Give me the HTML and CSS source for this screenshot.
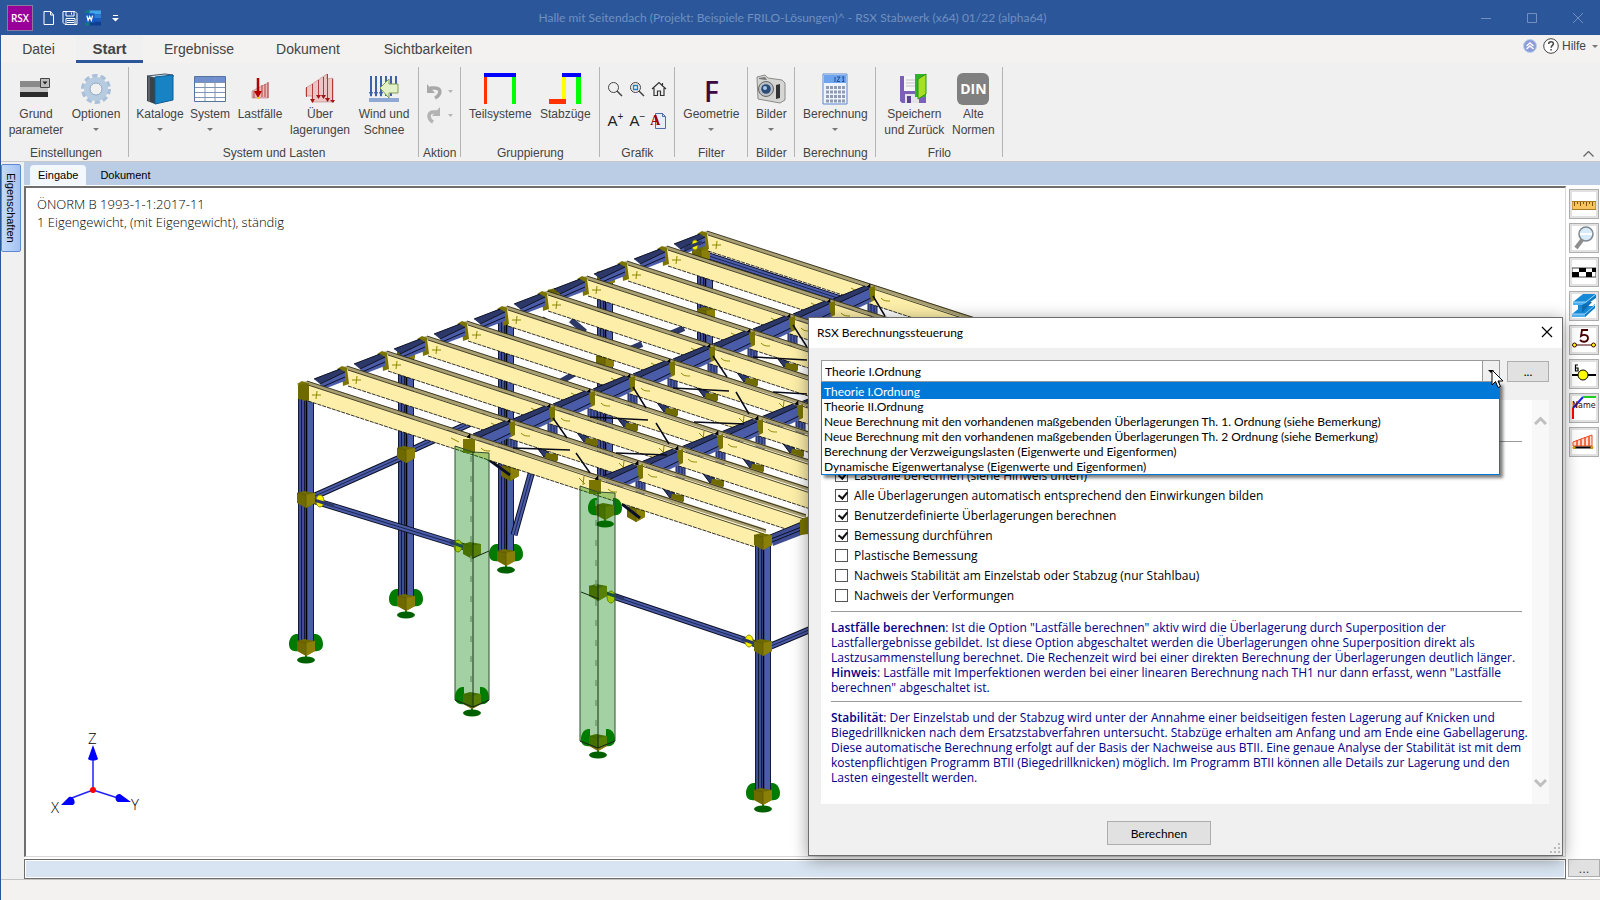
FILE: index.html
```html
<!DOCTYPE html>
<html lang="de">
<head>
    <meta charset="UTF-8">
    <meta name="viewport" content="width=device-width, initial-scale=1.0">
    <title>RSX Stabwerk</title>
    <link rel="stylesheet" href="styles.css">
</head>
<body>
<div class="app">
    <header class="titlebar">
        <div class="quick">
            <span class="logo">RSX</span>
            <button class="quick-btn" aria-label="Neu"><svg width="12" height="16" viewBox="0 0 12 16"><path d="M1 1.500h6.500l3 3.500v9.500H1zM7.500 1.500V5h3" fill="none" stroke="#fff"/></svg></button>
            <button class="quick-btn" aria-label="Speichern"><svg width="16" height="16" viewBox="0 0 16 16"><path d="M1 1.500h12l2 2v11H3l-2-2zM4 1.500v4.500h8v-4.500M9.500 2.500v2M4 14.500v-6h9v6M5 10.500h7M5 12.500h7" fill="none" stroke="#fff"/></svg></button>
            <button class="quick-btn word" aria-label="Word"><svg width="16" height="16" viewBox="0 0 17 16"><path d="M4 0h13v4H4z" fill="#41a5ee"/><path d="M4 4h13v4H4z" fill="#2b7cd3"/><path d="M4 8h13v4H4z" fill="#185abd"/><path d="M4 12h13v4H4z" fill="#103f91"/><path d="M0 0h5v3H0zM0 13h5v3H0z" fill="#107c7c"/><path d="M0 3h10v10H0z" fill="#185abd"/><path d="M2 5.500l1.300 5L5 6.500l1.700 4 1.300-5" fill="none" stroke="#fff" stroke-width="1.300"/></svg></button>
            <button class="quick-btn" aria-label="Anpassen"><svg width="7" height="8" viewBox="0 0 7 8"><path d="M1 1.500h5" stroke="#fff"/><path d="M0 4h7L3.500 7.500z" fill="#fff"/></svg></button>
        </div>
        <span class="title">Halle mit Seitendach (Projekt: Beispiele FRILO-Lösungen)^ - RSX Stabwerk (x64) 01/22 (alpha64)</span>
        <div class="window-btns">
            <button aria-label="Minimieren"><svg width="12" height="12" viewBox="0 0 12 12"><path d="M1 6.500h10" stroke="#6f90c0"/></svg></button>
            <button aria-label="Maximieren"><svg width="12" height="12" viewBox="0 0 12 12"><path d="M1.500 1.500h9v9h-9z" fill="none" stroke="#6f90c0"/></svg></button>
            <button aria-label="Schließen"><svg width="12" height="12" viewBox="0 0 12 12"><path d="M1 1l10 10M11 1L1 11" stroke="#6f90c0"/></svg></button>
        </div>
    </header>

    <nav class="menu">
        <a href="#" class="menu-datei">Datei</a>
        <a href="#" class="menu-start active">Start</a>
        <a href="#" class="menu-ergebnisse">Ergebnisse</a>
        <a href="#" class="menu-dokument">Dokument</a>
        <a href="#" class="menu-sicht">Sichtbarkeiten</a>
        <div class="help">
            <svg width="14" height="14" viewBox="0 0 14 14"><circle cx="7" cy="7" r="6.500" fill="#8d9bd6" stroke="#b4d2ee"/><path d="M3.500 7L7 4l3.500 3M3.500 10L7 7l3.500 3" fill="none" stroke="#fff" stroke-width="1.400"/></svg>
            <svg width="16" height="16" viewBox="0 0 16 16"><circle cx="8" cy="8" r="7.300" fill="#fff" stroke="#444"/><path d="M5.700 6c0-3 4.700-3 4.700-.300 0 1.700-2.300 1.800-2.300 4M8.100 11v1.600" fill="none" stroke="#444" stroke-width="1.500"/></svg>
            <button>Hilfe</button>
            <i class="caret"></i>
        </div>
    </nav>

    <section class="ribbon">
        <div class="group">
            <div class="tools">
                <button class="tool w60"><svg width="32" height="32" viewBox="0 0 32 32"><path d="M0 8h28v6H0z" fill="#8a8a8a"/><path d="M0 14h28v5H0z" fill="#c6c6c6"/><path d="M0 19h28v5H0z" fill="#2c2c2c"/><path d="M20.500 5.500h9v9h-9z" fill="#bdbdbd" stroke="#444"/><path d="M22.500 8.500h5L25 11.500z" fill="#222"/></svg><span>Grund<br>parameter</span></button>
                <button class="tool w60"><svg width="32" height="32" viewBox="0 0 32 32"><circle cx="16" cy="16" r="12.500" fill="none" stroke="#a9c0d8" stroke-width="5" stroke-dasharray="5 2.850"/><circle cx="16" cy="16" r="9" fill="#eef3f8" stroke="#b7cce0" stroke-width="6"/><circle cx="16" cy="16" r="6" fill="#f0f0f0" stroke="#8fa9c4"/></svg><span>Optionen</span><i class="caret"></i></button>
            </div>
            <div class="group-name">Einstellungen</div>
        </div>
        <div class="group lasten">
            <div class="tools">
                <button class="tool w52"><svg width="32" height="32" viewBox="0 0 32 32"><path d="M3 3l18-2 8 1v2L11 5z" fill="#d9e6ec" stroke="#456"/><path d="M3 3l8 2v26l-8-3z" fill="#3b4247"/><path d="M5 4v25" stroke="#7b858c"/><path d="M11 4l18-2v25l-18 4z" fill="#1783c4" stroke="#0c5c91"/></svg><span>Kataloge</span><i class="caret"></i></button>
                <button class="tool w48"><svg width="32" height="32" viewBox="0 0 32 32"><path d="M.500 3.500h31v25H.500z" fill="#fff" stroke="#56729e"/><path d="M1 4h30v5H1z" fill="#6f8fd0"/><path d="M1 9.500h30M1 14.500h30M1 19.500h30M1 24.500h30M11 4v24M21 4v24" stroke="#8095b5"/></svg><span>System</span><i class="caret"></i></button>
                <button class="tool w52"><svg width="32" height="32" viewBox="0 0 32 32"><path d="M8 18l16-8v15H8z" fill="#e9bcbc" stroke="#b06060" stroke-width=".500"/><path d="M10 18v7M18 12v12M21 11v13M24 9v16" stroke="#b04040"/><path d="M14 5v16" stroke="#b00000" stroke-width="2.500"/><path d="M10 18h8l-4 7z" fill="#b00000"/><path d="M13 24h3v2h-3z" fill="#fc0"/></svg><span>Lastfälle</span><i class="caret"></i></button>
                <button class="tool w68"><svg width="32" height="32" viewBox="0 0 32 32"><path d="M2 15L23 1v5l6-1v24H8v-6H2z" fill="#ecc5c5" stroke="#b47070" stroke-width=".500"/><path d="M2.500 14v10M8.500 11v17M14.500 7v17M19.500 4v20M23.500 1v25M28.500 6v22" stroke="#b33a3a"/><path d="M6 26h5l-2.500 4zM12 22h5l-2.500 4zM17 22h5l-2.500 4zM21 25h5l-2.500 4zM26 27h5l-2 3z" fill="#a01515"/></svg><span>Über<br>lagerungen</span></button>
                <button class="tool w60"><svg width="32" height="32" viewBox="0 0 32 32"><path d="M3 3v20M8 3v20M13 3v20M18 3v20M23 3v20M28 3v9" stroke="#3d62a8" stroke-width="2"/><path d="M1 19h4l-2 5zM6 19h4l-2 5zM11 19h4l-2 5z" fill="#3d62a8"/><path d="M1 25h30v4H1z" fill="#8fa9d4"/><path d="M12 15l9-9v5h9v9h-9v5z" fill="#e3f1c8" stroke="#7f9d55"/></svg><span>Wind und<br>Schnee</span></button>
            </div>
            <div class="group-name">System und Lasten</div>
        </div>
        <div class="group">
            <div class="tools history">
                <button aria-label="Rückgängig"><svg width="28" height="18" viewBox="0 0 28 18"><path d="M4 6h5c7 0 6 7 0 10" fill="none" stroke="#a9a9a9" stroke-width="3.500"/><path d="M1 2v9h8z" fill="#a9a9a9"/><path d="M22 8h5l-2.500 3z" fill="#b5b5b5"/></svg></button>
                <button aria-label="Wiederholen"><svg width="28" height="18" viewBox="0 0 28 18"><path d="M11 6H8c-7 0-6 7-1 10" fill="none" stroke="#b3b3b3" stroke-width="3.500"/><path d="M14 1v9H6z" fill="#b3b3b3"/><path d="M22 8h5l-2.500 3z" fill="#b5b5b5"/></svg></button>
            </div>
            <div class="group-name">Aktion</div>
        </div>
        <div class="group">
            <div class="tools">
                <button class="tool w70"><svg width="32" height="32" viewBox="0 0 32 32"><path d="M0 3h3v28H0z" fill="#ff3200"/><path d="M28 3h4v28h-4z" fill="#0f0"/><path d="M0 0h32v4H0z" fill="#00f"/></svg><span>Teilsysteme</span></button>
                <button class="tool w60"><svg width="32" height="32" viewBox="0 0 32 32"><path d="M13 3h4v24h-4z" fill="#ff0"/><path d="M27 3h5v28h-5z" fill="#0f0"/><path d="M13 0h19v4H13z" fill="#00f"/><path d="M0 26h17v5H0z" fill="#ff3200"/></svg><span>Stabzüge</span></button>
            </div>
            <div class="group-name">Gruppierung</div>
        </div>
        <div class="group">
            <div class="tools graphics">
                <button aria-label="Lupe"><svg width="16" height="16" viewBox="0 0 16 16"><circle cx="6.500" cy="6.500" r="5" fill="none" stroke="#444"/><path d="M10 10l5 5" stroke="#444" stroke-width="1.500"/></svg></button>
                <button aria-label="Ausschnitt"><svg width="16" height="16" viewBox="0 0 16 16"><circle cx="6.500" cy="6.500" r="5" fill="none" stroke="#444"/><path d="M4.500 4.500h4v4h-4z" fill="none" stroke="#1a86c8" stroke-width="1.300"/><path d="M10 10l5 5" stroke="#444" stroke-width="1.500"/></svg></button>
                <button aria-label="Gesamt"><svg width="16" height="16" viewBox="0 0 16 16"><path d="M1 8l7-6.500L15 8M3 7v7.500h3.500V10h3v4.500H13V7M11.500 2v3" fill="none" stroke="#333" stroke-width="1.200"/></svg></button>
                <button class="letter">A<sup>+</sup></button>
                <button class="letter">A<sup>−</sup></button>
                <button class="font-doc" aria-label="Schrift"><svg width="14" height="16" viewBox="0 0 14 16"><path d="M3.500.500h7l3 3v12h-10z" fill="#e8eef8" stroke="#4f6da0"/><path d="M10.500.500v3h3" fill="none" stroke="#4f6da0"/></svg><b>A</b></button>
            </div>
            <div class="group-name">Grafik</div>
        </div>
        <div class="group">
            <div class="tools">
                <button class="tool w64"><b class="filter-letter">F</b><span>Geometrie</span><i class="caret"></i></button>
            </div>
            <div class="group-name">Filter</div>
        </div>
        <div class="group">
            <div class="tools">
                <button class="tool w38"><svg width="32" height="32" viewBox="0 0 32 32"><path d="M2 4l8-2 3 3 14 2 3 3v17l-5 3-22-4z" fill="#d5d5d3" stroke="#8b8b88"/><path d="M4 5l6-1 2 3-8-1z" fill="#777"/><circle cx="11" cy="16" r="7.500" fill="#b9bfc4" stroke="#666"/><circle cx="11" cy="16" r="4.800" fill="#2a4a78"/><circle cx="10" cy="15" r="2" fill="#a7c6e8"/><path d="M21 12l4-1v14l-4 1z" fill="#333"/></svg><span>Bilder</span><i class="caret"></i></button>
            </div>
            <div class="group-name">Bilder</div>
        </div>
        <div class="group">
            <div class="tools">
                <button class="tool w72"><svg width="26" height="32" viewBox="0 0 26 32"><path d="M1 1h24v30H1z" fill="#eef4ff" stroke="#5a87cf"/><path d="M2 2h22v8H2z" fill="#6ea3ee"/><path d="M13 4v5M15 4h3l-3 4.500h3M20 4h2l-1 2 1 2.500h-2" fill="none" stroke="#234d96"/><path d="M4 14.500h19M4 19h19M4 23.500h19M4 28h19" stroke="#8f9bb0" stroke-width="3" stroke-dasharray="3 1"/></svg><span>Berechnung</span><i class="caret"></i></button>
            </div>
            <div class="group-name">Berechnung</div>
        </div>
        <div class="group">
            <div class="tools">
                <button class="tool w68"><svg width="32" height="32" viewBox="0 0 32 32"><path d="M2 3h26v27H4l-2-2z" fill="#7c60b8"/><path d="M6 3h17v15H6z" fill="#f6f6f6"/><path d="M8 7h13M8 10h13M8 13h13" stroke="#c4c4c4"/><path d="M7 21h14v9H7z" fill="#e3e3e8"/><path d="M9 23h4v7H9z" fill="#5b4494"/><path d="M17 1h11v23H17z" fill="#2fb32c"/><path d="M28 1v20l-8 5V6z" fill="#a6e01e" stroke="#2f8f20"/></svg><span>Speichern<br>und Zurück</span></button>
                <button class="tool w50"><b class="din">DIN</b><span>Alte<br>Normen</span></button>
            </div>
            <div class="group-name">Frilo</div>
        </div>
        <button class="collapse" aria-label="Einklappen"><svg width="11" height="6" viewBox="0 0 11 6"><path d="M.500 5.500l5-5 5 5" fill="none" stroke="#666" stroke-width="1.300"/></svg></button>
    </section>

    <main class="work">
        <aside class="side"><button class="side-tab">Eigenschaften</button></aside>
        <div class="content">
            <div class="tabs">
                <button class="tab current">Eingabe</button>
                <button class="tab">Dokument</button>
            </div>
            <div class="row">
                <div class="canvas">
                    <p class="info">ÖNORM B 1993-1-1:2017-11<br>1 Eigengewicht, (mit Eigengewicht), ständig</p>
                    <svg class="model" width="100%" height="100%">
                        <defs>
                            <!-- steel profile seen from the side -->
                            <pattern id="steel" width="16" height="16" patternUnits="userSpaceOnUse">
                                <path d="M0 0h16v16H0z" fill="#4a5ba8"/>
                                <path d="M0 0h8v16H0z" fill="#3f4e94"/>
                                <path d="M.500 0v16M3.500 0v16M6.500 0v16M15.500 0v16" stroke="#141a38"/>
                                <path d="M8.500 0v16" stroke="#000" stroke-width="1.500"/>
                            </pattern>
                            <g id="cube">
                                <path d="M-9-6l7-2 11 2v10l-9 5-9-5z" fill="#6e6a00"/>
                                <path d="M0-4l9-2V4L0 9z" fill="#8a8008"/>
                                <path d="M-9-6L0-4v13" fill="none" stroke="#5a5600" stroke-width=".700"/>
                            </g>
                            <g id="base">
                                <path d="M-8 4v-17c-6-1-9 5-9 10s3 8 9 7zM8 4v-17c6-1 9 5 9 10s-3 8-9 7z" fill="#007a00"/>
                                <path d="M-1 6h2v6h-2z" fill="#0a8a0a"/>
                                <ellipse cx="0" cy="13" rx="9" ry="3.500" fill="#006000"/>
                                <use href="#cube"/>
                            </g>
                            <!-- purlin piece between two rafters -->
                            <g id="purlin">
                                <path d="M8 4l33-15V3L20 13 8 9z" fill="#4a5ba8"/>
                                <path d="M3 0l32-13 6 2L8 4z" fill="#2c3867"/>
                                <path d="M3 0l32-13M8 4l33-15M16 11L41-1" stroke="#0c1024" fill="none"/>
                                <path d="M39-11l6-2v14l-4 2z" fill="#7a7400"/>
                            </g>
                            <g id="rafter">
                                <path d="M4 4l456 148-9 14L4 20z" fill="#fdefa9"/>
                                <path d="M-1 1l4-1 459 148v4L4 4z" fill="#aaa072"/>
                                <path d="M3 0l459 149M4 4l456 149" stroke="#1c1a08" stroke-width=".800" fill="none"/>
                                <path d="M4 20l447 146" stroke="#000" stroke-width=".800" stroke-dasharray="4 1" fill="none"/>
                                <path d="M8 14h9M13 10l-1 8M147 57l8 4M177 67c3 3 5 3 9 3M275 97l6 6M280 95l-1 9M304 108c3 3 5 3 9 3" stroke="#8e8800" fill="none"/>
                                <path d="M166 53v4l-3-1zM294 95v4l-3-1z" stroke="#000" stroke-width=".700"/>
                                <path d="M-7 3l5-3 5 2 2 16-6 2-1-14z" fill="#7a7400"/>
                            </g>
                            <g id="bay">
                                <path d="M16 3l25-12v9L20 8z" fill="#4a5ba8"/>
                                <path d="M10-2l26-10 5 3-25 12z" fill="#2c3867"/>
                                <path d="M10-2l26-10M16 3l25-12M18 6l23-10" stroke="#0c1024" fill="none"/>
                                <use href="#purlin" x="166" y="53"/>
                                <use href="#purlin" x="294" y="96"/>
                                <use href="#rafter"/>
                            </g>
                            <!-- lower chord node below the roof -->
                            <g id="node">
                                <path d="M-17-12l12 6 5 6h-8z" fill="#2c3867" stroke="#0c1024"/>
                                <path d="M-6-4l12 1v6l-4 4-10-3z" fill="#716c00"/>
                            </g>
                            <path id="stub" d="M0 0h9v18H0zM3 0v18M6 0v18" fill="#4a5ba8" stroke="#1a2248"/>
                            <g id="braces" fill="none">
                                <path d="M315 496l85-38M414 449l72-33M312 500l156 48M610 595l146 49M771 646l45-19M514 535l21-75"/>
                                <path d="M706 255l150 49"/>
                            </g>
                        </defs>
                        <g transform="translate(-26 -188)">
                            <!-- rear columns -->
                            <g fill="url(#steel)">
                                <rect transform="translate(398 355)" width="16" height="248"/>
                                <rect transform="translate(498 320)" width="16" height="236"/>
                                <rect transform="translate(597 275)" width="16" height="205"/>
                                <rect transform="translate(697 265)" width="16" height="90"/>
                            </g>
                            <path d="M546 318l-8 14M571 320l14 12M628 350l14-6M670 334l14-6M560 382l14-8" stroke="#2c3867" stroke-width="6"/>
                            <use href="#braces" stroke="#0c1024" stroke-width="7"/>
                            <use href="#braces" stroke="#4a5ba8" stroke-width="5"/>
                            <use href="#braces" stroke="#1c2550" stroke-width="1"/>
                            <g>
                                <use href="#node" x="792" y="367"/><use href="#node" x="752" y="382"/><use href="#node" x="712" y="397"/>
                                <use href="#node" x="672" y="412"/><use href="#node" x="632" y="427"/><use href="#node" x="592" y="442"/>
                                <use href="#node" x="552" y="457"/><use href="#node" x="798" y="453"/><use href="#node" x="758" y="468"/>
                                <use href="#node" x="718" y="483"/><use href="#node" x="678" y="498"/>
                            </g>
                            <g>
                                <use href="#stub" x="868" y="298"/><use href="#stub" x="828" y="313"/><use href="#stub" x="788" y="328"/><use href="#stub" x="748" y="343"/>
                                <use href="#stub" x="708" y="358"/><use href="#stub" x="668" y="373"/><use href="#stub" x="628" y="388"/><use href="#stub" x="588" y="403"/>
                                <use href="#stub" x="548" y="418"/><use href="#stub" x="508" y="433"/>
                                <use href="#stub" x="796" y="416"/><use href="#stub" x="756" y="431"/><use href="#stub" x="716" y="446"/><use href="#stub" x="676" y="461"/><use href="#stub" x="636" y="476"/>
                            </g>
                            <use href="#cube" x="406" y="454"/><use href="#base" x="406" y="602"/>
                            <use href="#cube" x="510" y="472"/><use href="#base" x="506" y="557"/>
                            <use href="#cube" x="636" y="513"/><use href="#cube" x="605" y="362"/><use href="#cube" x="706" y="315"/>
                            <use href="#cube" x="701" y="254"/>
                            <path d="M488 459l22 16M622 504l18 14" stroke="#0c1024" stroke-width="3"/>
                            <!-- roof, back to front -->
                            <use href="#rafter" x="704" y="231"/>
                            <use href="#bay" x="664" y="246"/>
                            <use href="#bay" x="624" y="261"/>
                            <use href="#cube" x="606" y="278"/>
                            <use href="#bay" x="584" y="276"/>
                            <use href="#cube" x="557" y="296"/>
                            <use href="#bay" x="544" y="291"/>
                            <use href="#bay" x="504" y="306"/>
                            <use href="#bay" x="464" y="321"/>
                            <use href="#bay" x="424" y="336"/>
                            <use href="#cube" x="406" y="354"/>
                            <use href="#bay" x="384" y="351"/>
                            <use href="#bay" x="344" y="366"/>
                            <rect transform="translate(298 390)" width="16" height="256" fill="url(#steel)"/>
                            <use href="#bay" x="304" y="381"/>
                            <path d="M298 385l11-2v18l-11-2z" fill="#6e6a00"/>
                            <!-- wind bracing -->
                            <path d="M873 296l12 20M793 325l14 22M713 356l14 21M753 357l54 3M673 388l56 3M736 392l13 22M590 417l58 3M656 423l13 21M633 387l13 21M553 418l14 20M513 448l57 2M576 453l14 20M694 422l50 2M616 453l51 2M773 392l34 2" stroke="#0a0c18" stroke-width="1.500" fill="none"/>
                            <g fill="#f5ee00" stroke="#8e8800">
                                <ellipse cx="320" cy="501" rx="4" ry="6"/><ellipse cx="458" cy="546" rx="4" ry="6"/>
                                <ellipse cx="611" cy="597" rx="4" ry="6"/><ellipse cx="749" cy="641" rx="4" ry="6"/><ellipse cx="695" cy="245" rx="3" ry="5"/>
                            </g>
                            <path d="M314 500l20 6M450 542l14 5M606 593l18 6M742 639l14 5M684 249l18-7" stroke="#2c3867" stroke-width="3"/>
                            <use href="#cube" x="306" y="499"/><use href="#base" x="306" y="647"/>
                            <!-- front right column -->
                            <path d="M770 535l34-14v13l-31 12z" fill="#3f4e94"/>
                            <path d="M770 535l34-14M771 539l33-13M772 542l32-13" stroke="#0c1024"/>
                            <path d="M800 520l9-4v18l-9 1z" fill="#7a7400"/>
                            <rect transform="translate(755 545)" width="16" height="250" fill="url(#steel)"/>
                            <use href="#cube" x="763" y="541"/><use href="#cube" x="763" y="647"/><use href="#base" x="763" y="796"/>
                            <!-- selected columns -->
                            <path d="M463 439h12v14h-12zM589 480h12v14h-12z" fill="#7a7400"/>
                            <use href="#base" x="605" y="511"/>
                            <use href="#base" x="472" y="700"/><use href="#cube" x="472" y="550"/>
                            <use href="#base" x="598" y="742"/><use href="#cube" x="598" y="592"/>
                            <g fill="#008000" fill-opacity=".36" stroke="#30502f" stroke-width="1">
                                <path d="M455 446l18 6 16 1v247l-16 7-18-7z"/>
                                <path d="M580 486l18 6 17 1v248l-17 7-18-7z"/>
                            </g>
                            <path d="M473 452v255M455 700l18 7 16-7M598 493v255M580 741l18 7 17-7M473 558l16-7M581 592l18 7" stroke="#132b13" fill="none"/>
                            <path d="M471 456v230M596 500v230" stroke="#6f9e70" stroke-width="1.500" stroke-dasharray="6 14"/>
                            <!-- axes -->
                            <path d="M93 790v-32M93 790l-24 9M93 790l28 9" stroke="#22f" stroke-width="1.500"/>
                            <path d="M93 745l-5 14c2 2 8 2 10 0zM61 805l8-8c4-2 8 6 4 8zM131 802l-11-8c-5-1-6 7-2 8z" fill="#00f"/>
                            <circle cx="93" cy="790" r="3" fill="red"/>
                            <g class="axis"><text x="88" y="744">Z</text><text x="51" y="813">X</text><text x="131" y="810">Y</text></g>
                        </g>
                    </svg>
                </div>
                <div class="view-tools">
                    <button aria-label="Maßlinien"><svg width="24" height="24" viewBox="0 0 24 24"><path d="M0 9.500h24v8H0z" fill="#f6c35e" stroke="#a87a20"/><path d="M2.500 10v4M5.500 10v2M8.500 10v4M11.500 10v2M14.500 10v4M17.500 10v2M20.500 10v4" stroke="#7a5410"/></svg></button>
                    <button aria-label="Lupe"><svg width="24" height="24" viewBox="0 0 24 24"><path d="M10 14l-6 8" stroke="#8e8e8e" stroke-width="4"/><circle cx="14" cy="8" r="7" fill="#d8ebfb" stroke="#808890" stroke-width="1.500"/><path d="M8 8h12" stroke="#fff" stroke-width="2"/></svg></button>
                    <button aria-label="Raster"><svg width="24" height="24" viewBox="0 0 24 24"><path d="M0 8h24v9H0z" fill="#fff" stroke="#444"/><path d="M7 8h7v4H7zM20 8h4v4h-4zM0 12h7v5H0zM14 12h6v5h-6z" fill="#000"/></svg></button>
                    <button aria-label="Profil"><svg width="24" height="24" viewBox="0 0 24 24"><path d="M1 8L11 0h13L14 8zM0 20l10-8h13L13 23H0z" fill="#1489d8"/><path d="M1 8h13v3H1zM0 20h13v3H0z" fill="#4fb0f0"/><path d="M6 11h4v9H6z" fill="#1489d8"/><path d="M10 11l6-3 4 0-10 11z" fill="#0b6cb4"/><path d="M14 8L24 0v4L14 11zM13 20l10-10v4l-10 9z" fill="#0f7ac6"/><path d="M1 8h13L24 0M0 20h13l10-9" fill="none" stroke="#bfe2fa" stroke-width=".800"/></svg></button>
                    <button aria-label="Stabnummern"><svg width="24" height="24" viewBox="0 0 24 24"><path d="M16 2H10l-1 6c3-2 7-1 7 2 0 4-5 5-8 2" fill="none" stroke="#400" stroke-width="1.800"/><path d="M2 17h20" stroke="#400"/><circle cx="2.500" cy="17" r="2" fill="#ff0" stroke="#400"/><circle cx="21.500" cy="17" r="2" fill="#ff0" stroke="#400"/></svg></button>
                    <button aria-label="Knotennummern"><svg width="24" height="24" viewBox="0 0 24 24"><path d="M0 13h24" stroke="#000" stroke-width="2"/><circle cx="11" cy="13" r="5" fill="#ff0" stroke="#000"/><path d="M6 3H3.500v6H6V6H4" fill="none" stroke="#000" stroke-width="1.200"/></svg></button>
                    <button class="name-btn" aria-label="Namen"><svg width="24" height="24" viewBox="0 0 24 24"><path d="M1 23V12" stroke="red" stroke-width="2"/><path d="M1 12L11 1" stroke="#22e" stroke-width="2"/><path d="M11 1h13" stroke="#2c2" stroke-width="2"/></svg><span>Name</span></button>
                    <button aria-label="Lasten"><svg width="24" height="24" viewBox="0 0 24 24"><path d="M1 12L20 5v11H1z" fill="#ffe0d6" stroke="#f04a20"/><path d="M5 10v6M9 9v7M13 7v9M17 6v10" stroke="#f04a20" stroke-width="1.500"/><path d="M1 17.500h20" stroke="#000" stroke-width="2"/><circle cx="2" cy="17.500" r="1.500" fill="#e0a000"/><circle cx="20" cy="17.500" r="1.500" fill="#e0a000"/></svg></button>
                </div>
            </div>
            <div class="command">
                <input type="text" aria-label="Eingabezeile">
                <button>...</button>
            </div>
        </div>

        <section class="dialog">
            <div class="dialog-head">
                <span>RSX Berechnungssteuerung</span>
                <button aria-label="Dialog schließen"><svg width="12" height="12" viewBox="0 0 12 12"><path d="M1 1l10 10M11 1L1 11" stroke="#000" stroke-width="1.200"/></svg></button>
            </div>
            <div class="dialog-body">
                <div class="choice">
                    <div class="combo">
                        <select aria-label="Berechnungsart">
                            <option>Theorie I.Ordnung</option>
                            <option>Theorie II.Ordnung</option>
                        </select>
                        <span class="combo-arrow"><i class="caret"></i></span>
                        <ul class="options">
                            <li class="selected">Theorie I.Ordnung</li>
                            <li>Theorie II.Ordnung</li>
                            <li>Neue Berechnung mit den vorhandenen maßgebenden Überlagerungen Th. 1. Ordnung (siehe Bemerkung)</li>
                            <li>Neue Berechnung mit den vorhandenen maßgebenden Überlagerungen Th. 2 Ordnung (siehe Bemerkung)</li>
                            <li>Berechnung der Verzweigungslasten (Eigenwerte und Eigenformen)</li>
                            <li>Dynamische Eigenwertanalyse (Eigenwerte und Eigenformen)</li>
                        </ul>
                        <svg class="cursor" width="13" height="20" viewBox="0 0 13 20"><path d="M1 1v15l3.500-3.500L7 18.500l2.500-1L7 12h5z" fill="#fff" stroke="#000"/></svg>
                    </div>
                    <button class="btn more">...</button>
                </div>
                <div class="panel">
                    <div class="panel-text">
                        <hr class="first">
                        <div class="checks">
                            <label><input type="checkbox" checked>Lastfälle berechnen (siehe Hinweis unten)</label>
                            <label><input type="checkbox" checked>Alle Überlagerungen automatisch entsprechend den Einwirkungen bilden</label>
                            <label><input type="checkbox" checked>Benutzerdefinierte Überlagerungen berechnen</label>
                            <label><input type="checkbox" checked>Bemessung durchführen</label>
                            <label><input type="checkbox">Plastische Bemessung</label>
                            <label><input type="checkbox">Nachweis Stabilität am Einzelstab oder Stabzug (nur Stahlbau)</label>
                            <label><input type="checkbox">Nachweis der Verformungen</label>
                        </div>
                        <hr>
                        <p><b>Lastfälle berechnen</b>: Ist die Option "Lastfälle berechnen" aktiv wird die Überlagerung durch Superposition der<br>Lastfallergebnisse gebildet. Ist diese Option abgeschaltet werden die Überlagerungen ohne Superposition direkt als<br>Lastzusammenstellung berechnet. Die Rechenzeit wird bei einer direkten Berechnung der Überlagerungen deutlich länger.<br><b>Hinweis</b>: Lastfälle mit Imperfektionen werden bei einer linearen Berechnung nach TH1 nur dann erfasst, wenn "Lastfälle<br>berechnen" abgeschaltet ist.</p>
                        <hr>
                        <p><b>Stabilität</b>: Der Einzelstab und der Stabzug wird unter der Annahme einer beidseitigen festen Lagerung auf Knicken und<br>Biegedrillknicken nach dem Ersatzstabverfahren untersucht. Stabzüge erhalten am Anfang und am Ende eine Gabellagerung.<br>Diese automatische Berechnung erfolgt auf der Basis der Nachweise aus BTII. Eine genaue Analyse der Stabilität ist mit dem<br>kostenpflichtigen Programm BTII (Biegedrillknicken) möglich. Im Programm BTII können alle Details zur Lagerung und den<br>Lasten eingestellt werden.</p>
                    </div>
                    <div class="scroll">
                        <svg width="13" height="9" viewBox="0 0 13 9"><path d="M1 8l5.500-5.500L12 8" fill="none" stroke="#bfbfbf" stroke-width="3"/></svg>
                        <svg width="13" height="9" viewBox="0 0 13 9"><path d="M1 1l5.500 5.500L12 1" fill="none" stroke="#bfbfbf" stroke-width="3"/></svg>
                    </div>
                </div>
                <div class="actions"><button class="btn run">Berechnen</button></div>
                <svg class="grip" width="10" height="10" viewBox="0 0 10 10"><path d="M8 0h2v2H8zM8 4h2v2H8zM8 8h2v2H8zM4 4h2v2H4zM4 8h2v2H4zM0 8h2v2H0z" fill="#bbb"/></svg>
            </div>
        </section>
    </main>
    <footer class="status"></footer>
</div>
</body>
</html>
```
FILE: styles.css
```css
* {
    box-sizing: border-box;
}
body {
    margin: 0;
    font-family: "Liberation Sans", Arial, sans-serif;
    font-size: 13px;
    color: #444;
}
button {
    font: inherit;
    color: inherit;
    background: none;
    border: none;
    padding: 0;
    margin: 0;
}
svg {
    display: block;
}
.app {
    height: 100vh;
    display: flex;
    flex-direction: column;
    background: #f0f0f0;
    border-left: 1px solid #2b579a;
    overflow: hidden;
}
.caret {
    border: 3px solid transparent;
    border-top-color: #777;
    border-bottom: none;
}

/* title bar */
.titlebar {
    height: 35px;
    flex: none;
    display: grid;
    grid-template-columns: 1fr auto 1fr;
    align-items: center;
    background: #2b579a;
}
.quick {
    display: flex;
    align-items: center;
    gap: 7px;
    padding-left: 6px;
}
.logo {
    width: 26px;
    height: 26px;
    border: 1px solid #8c7a9c;
    background: #990099;
    color: #fff;
    font: 600 10px/24px "Open Sans", sans-serif;
    text-align: center;
    margin-right: 3px;
}
.quick-btn:last-child {
    margin-left: 4px;
}
.title {
    font: 12px Lato, sans-serif;
    color: #6f90c0;
    margin-right: 16px;
}
.window-btns {
    display: flex;
    justify-content: flex-end;
    gap: 34px;
    padding-right: 16px;
}

/* menu */
.menu {
    height: 28px;
    flex: none;
    display: flex;
    background: #f3f2f1;
}
.menu a {
    font-size: 14px;
    line-height: 28px;
    color: #444;
    text-decoration: none;
    text-align: center;
}
.menu .active {
    font-weight: bold;
    font-size: 15px;
    background: #f0f0f0;
    border-bottom: 3px solid #2b579a;
}
.menu-datei { width: 75px; }
.menu-start { width: 67px; }
.menu-ergebnisse { width: 112px; }
.menu-dokument { width: 106px; }
.menu-sicht { width: 134px; }
.help {
    margin-left: auto;
    display: flex;
    align-items: center;
    gap: 6px;
    padding: 0 2px 6px 0;
    font-size: 12px;
}
.help button {
    margin-left: -3px;
}

/* ribbon */
.ribbon {
    position: relative;
    height: 99px;
    flex: none;
    display: flex;
    padding-top: 4px;
    border-bottom: 1px solid #c8c8c8;
    font-size: 12px;
}
.group {
    display: flex;
    flex-direction: column;
    justify-content: space-between;
    height: 90px;
    padding: 0 4px;
    border-right: 1px solid #b4b4b4;
}
.group:first-child {
    padding: 0 2px 0 5px;
}
.group.lasten {
    padding-left: 5px;
}
.group-name {
    text-align: center;
    line-height: 14px;
    margin-bottom: -3px;
}
.tools {
    display: flex;
    padding-top: 6px;
}
.tool {
    display: flex;
    flex-direction: column;
    align-items: center;
    line-height: 16px;
    white-space: nowrap;
}
.tool span {
    margin-top: 1px;
}
.tool .caret {
    margin-top: 6px;
}
.w38 { width: 38px; }
.w48 { width: 48px; }
.w50 { width: 50px; }
.w52 { width: 52px; }
.w60 { width: 60px; }
.w64 { width: 64px; }
.w68 { width: 68px; }
.w70 { width: 70px; }
.w72 { width: 72px; }
.history {
    flex-direction: column;
    align-items: center;
    gap: 6px;
    padding-top: 15px;
}
.graphics {
    display: grid;
    grid-template-columns: repeat(3, 22px);
    grid-template-rows: 16px 20px;
    gap: 14px 0;
    padding-top: 14px;
    justify-items: center;
    align-items: center;
}
.letter {
    font-size: 15px;
    line-height: 20px;
    color: #222;
}
.letter sup {
    font-size: 10px;
    line-height: 10px;
}
.font-doc {
    position: relative;
}
.font-doc b {
    position: absolute;
    left: -2px;
    top: 1px;
    font: bold 14px/14px "Liberation Serif", serif;
    color: #a00000;
}
.filter-letter {
    height: 32px;
    font: 600 28px/37px "Open Sans", sans-serif;
    color: #3a0a3e;
}
.din {
    width: 32px;
    height: 32px;
    border-radius: 6px;
    background: #808080;
    color: #fff;
    font: bold 14px/32px "Open Sans", sans-serif;
    text-align: center;
}
.collapse {
    margin: auto 6px 4px auto;
}

/* work area */
.work {
    position: relative;
    flex: 1;
    min-height: 0;
    display: flex;
}
.side {
    width: 23px;
    padding-top: 2px;
}
.side-tab {
    width: 20px;
    height: 88px;
    border: 1px solid #5b8ad0;
    border-radius: 2px;
    background: linear-gradient(90deg, #c5dafa, #a3c2f2);
    writing-mode: vertical-rl;
    font-size: 11px;
    color: #000;
}
.content {
    flex: 1;
    min-width: 0;
    display: flex;
    flex-direction: column;
}
.tabs {
    height: 24px;
    display: flex;
    align-items: flex-end;
    padding-left: 6px;
    background: #bacde5;
    border-bottom: 1px solid #fff;
}
.tab {
    height: 20px;
    padding: 0 8px;
    margin-right: 6px;
    border-radius: 4px 4px 0 0;
    font-size: 11px;
    color: #000;
}
.tab.current {
    background: #f3f8fe;
}
.row {
    flex: 1;
    min-height: 0;
    display: flex;
}
.canvas {
    position: relative;
    flex: 1;
    min-width: 0;
    background: #fff;
    border: 2px solid #6e6e6e;
    border-right: 1px solid #d8d8d8;
    border-bottom: 1px solid #d8d8d8;
    overflow: hidden;
}
.info {
    position: absolute;
    left: 11px;
    top: 7px;
    margin: 0;
    font: 300 13px/18px "Open Sans", "Noto Sans", sans-serif;
    color: #000;
}
.axis {
    font: 300 15px "Open Sans", "Noto Sans", sans-serif;
    fill: #000;
}
.view-tools {
    width: 34px;
    padding: 3px 0 0 3px;
    display: flex;
    flex-direction: column;
    gap: 4px;
    background: #fff;
}
.view-tools button {
    position: relative;
    width: 30px;
    height: 30px;
    flex: none;
    padding: 1px;
    border: 1px solid #adadad;
    background: #fff;
    box-shadow: inset 0 0 0 2px #e1e1e1;
    display: grid;
    place-items: center;
}
.name-btn span {
    position: absolute;
    left: 2px;
    top: 6px;
    font: 8px/12px "DejaVu Sans", sans-serif;
    color: #400;
}
.command {
    display: flex;
    height: 22px;
    padding-top: 2px;
    background: #fff;
}
.command input {
    flex: 1;
    min-width: 0;
    border: 1px solid #6e6e6e;
    outline: 1px solid #fff;
    outline-offset: -2px;
    background: #d8e4f1;
}
.command button {
    width: 32px;
    margin: 0 0 2px 2px;
    border: 1px solid #adadad;
    background: #e1e1e1;
}
.status {
    height: 21px;
    flex: none;
    background: #f3f2f1;
    border-top: 1px solid #c4c4c4;
}

/* dialog */
.dialog {
    position: absolute;
    right: 37px;
    top: 155px;
    width: 755px;
    display: flex;
    flex-direction: column;
    background: #f0f0f0;
    border: 1px solid #6d6d6d;
    box-shadow: 0 3px 16px rgba(0, 0, 0, 0.4);
    font: 12px/15px "Open Sans", sans-serif;
    color: #000;
}
.dialog-head {
    height: 30px;
    display: flex;
    align-items: center;
    justify-content: space-between;
    padding: 0 9px 2px 8px;
    background: #fff;
}
.dialog-head,
.choice,
.actions {
    font-family: Lato, sans-serif;
}
.dialog-body {
    position: relative;
    padding: 12px 13px 10px 12px;
}
.choice {
    display: flex;
    gap: 7px;
    align-items: center;
}
.combo {
    position: relative;
    flex: 1;
    height: 22px;
}
.combo select {
    appearance: none;
    width: 100%;
    height: 22px;
    padding: 0 3px;
    border: 1px solid #999;
    border-radius: 0;
    background: #fff;
    font: inherit;
    color: #000;
}
.combo-arrow {
    position: absolute;
    right: 0;
    top: 0;
    width: 18px;
    height: 22px;
    border: 1px solid #999;
    background: #f0f0f0;
    display: grid;
    place-items: center;
}
.combo-arrow .caret {
    border-top-color: #000;
}
.options {
    position: absolute;
    z-index: 2;
    left: 0;
    right: 0;
    top: 22px;
    margin: 0;
    padding: 0;
    list-style: none;
    background: #fff;
    border: 1px solid #0078d7;
    box-shadow: 3px 3px 3px rgba(0, 0, 0, 0.5);
}
.options li {
    padding-left: 2px;
    white-space: nowrap;
}
.options .selected {
    padding-top: 1px;
    background: #0078d7;
    color: #fff;
}
.cursor {
    position: absolute;
    z-index: 3;
    right: -4px;
    top: 9px;
}
.btn {
    border: 1px solid #adadad;
    background: #e1e1e1;
}
.more {
    width: 42px;
    height: 21px;
}
.panel {
    display: flex;
    margin-top: 18px;
    height: 404px;
    background: #fff;
}
.panel-text {
    flex: 1;
    min-width: 0;
    padding: 0 10px;
    color: #00008b;
    white-space: nowrap;
}
.panel hr {
    border: none;
    border-top: 1px solid #999;
    margin: 0 0 8px;
}
.panel .first {
    margin: 41px 0 23px;
}
.panel p {
    margin: 0 0 6px;
}
.panel b {
    font-weight: 600;
}
.checks {
    color: #000;
    padding: 0 0 6px 4px;
}
.checks label {
    display: flex;
    align-items: center;
    gap: 6px;
    height: 20px;
}
.checks input {
    appearance: none;
    width: 13px;
    height: 13px;
    margin: 0;
    border: 1px solid #555;
    background: #fff;
}
.checks input:checked::before {
    content: "";
    display: block;
    width: 4px;
    height: 7px;
    margin: 0 0 0 4px;
    border: solid #111;
    border-width: 0 2px 2px 0;
    transform: rotate(40deg);
}
.scroll {
    width: 17px;
    display: flex;
    flex-direction: column;
    justify-content: space-between;
    align-items: center;
    padding: 16px 0;
    background: #f8f8f8;
}
.actions {
    display: flex;
    justify-content: center;
    padding: 17px 52px 0 0;
}
.run {
    width: 104px;
    height: 24px;
}
.grip {
    position: absolute;
    right: 2px;
    bottom: 2px;
}
```
